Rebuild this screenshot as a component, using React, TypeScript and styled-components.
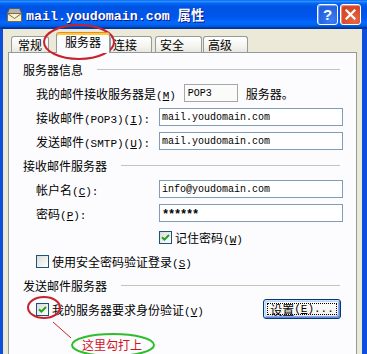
import React from "react";
import styled, { createGlobalStyle, css } from "styled-components";

const CJK = `"Noto Sans CJK SC", "Liberation Sans", sans-serif`;
const MONO = `"Liberation Mono", "Noto Sans CJK SC", monospace`;

const GlobalStyle = createGlobalStyle`
  html, body {
    margin: 0;
    padding: 0;
    background: #ECE9D8;
  }
  body {
    font-family: ${CJK};
    font-size: 12px;
    color: #000;
  }
`;

const Window = styled.div`
  position: relative;
  width: 367px;
  height: 354px;
  overflow: hidden;
  display: flex;
  flex-direction: column;
  background: #ECE9D8;
`;

const TitleBar = styled.div`
  flex: none;
  height: 29px;
  display: flex;
  align-items: center;
  padding: 0 6px 0 6px;
  background: linear-gradient(
    #0058ee 0%,
    #3593ff 4%,
    #288eff 6%,
    #127dff 8%,
    #036ffc 10%,
    #0262ee 14%,
    #0057e5 20%,
    #0054e3 24%,
    #0055eb 56%,
    #005bf5 66%,
    #026afe 76%,
    #0062ef 86%,
    #0052d6 92%,
    #0040ab 94%,
    #003092 100%
  );
`;

const TitleText = styled.span`
  margin-left: 3px;
  flex: 1;
  font-family: ${MONO};
  font-size: 13.3px;
  font-weight: bold;
  color: #fff;
  text-shadow: 1px 1px 0 #0a1883;
  white-space: nowrap;
`;

const CaptionButton = styled.div<{ $kind: "help" | "close" }>`
  box-sizing: border-box;
  width: 21px;
  height: 21px;
  margin-left: 2px;
  border: 1px solid #fff;
  border-radius: 3px;
  display: flex;
  align-items: center;
  justify-content: center;
  color: #fff;
  font-family: "Liberation Sans", sans-serif;
  font-weight: bold;
  font-size: 15px;
  ${({ $kind }) =>
    $kind === "help"
      ? css`
          background: radial-gradient(circle at 70% 80%, #3c7ef5 0%, #2663e0 60%, #1f57d2 100%);
          box-shadow: inset 1px 1px 1px #7aa8ff;
        `
      : css`
          background: radial-gradient(circle at 70% 80%, #e6673f 0%, #d9482a 60%, #c53c1c 100%);
          box-shadow: inset 1px 1px 1px #f09a7c;
        `}
`;

const Body = styled.div`
  flex: 1;
  display: flex;
  flex-direction: column;
  padding: 0 5px;
  border-left: 3px solid #0b4fdb;
  border-right: 5px solid #0b4fdb;
`;

const TabRow = styled.div`
  flex: none;
  height: 23px;
  display: flex;
  align-items: flex-end;
  padding-left: 3px;
`;

const Tab = styled.div<{ $active?: boolean; $w: number; $pl: number; $mr?: number }>`
  box-sizing: border-box;
  width: ${({ $w }) => $w}px;
  padding-left: ${({ $pl }) => $pl}px;
  margin-right: ${({ $mr }) => $mr ?? 0}px;
  border: 1px solid #919b9c;
  border-bottom: none;
  border-radius: 3px 3px 0 0;
  white-space: nowrap;
  ${({ $active }) =>
    $active
      ? css`
          position: relative;
          z-index: 1;
          height: 21px;
          margin-bottom: -1px;
          line-height: 17px;
          background: #fcfcfe;
          border-top-color: #e68b2c;
          box-shadow: inset 0 2px 0 #ffc83c;
        `
      : css`
          height: 16px;
          line-height: 15px;
          background: linear-gradient(#ffffff, #f5f4ef 60%, #e9e7df);
        `}
`;

const Panel = styled.div`
  flex: 1 0 auto;
  min-height: 310px;
  box-sizing: border-box;
  display: flex;
  flex-direction: column;
  padding: 4px 13px 0 14px;
  background: #fcfcfe;
  border: 1px solid #919b9c;
`;

const GroupHeader = styled.div`
  height: 24px;
  display: flex;
  align-items: center;
  gap: 14px;
  margin-right: 3px;
  white-space: nowrap;
`;

const Rule = styled.div`
  flex: 1;
  height: 1px;
  background: #c6c3b6;
`;

const Rows = styled.div`
  display: flex;
  flex-direction: column;
  padding-left: 13px;
`;

const FieldRow = styled.div`
  height: 24px;
  display: grid;
  grid-template-columns: 123px 1fr;
  align-items: center;
  white-space: nowrap;
`;

const InlineRow = styled.div`
  height: 24px;
  display: flex;
  align-items: center;
  gap: 8px;
  white-space: nowrap;
`;

const SplitRow = styled.div`
  height: 24px;
  display: flex;
  align-items: center;
  justify-content: space-between;
  padding-right: 2px;
`;

const Lat = styled.span`
  font-family: ${MONO};
  font-size: 11px;
`;

const TextBox = styled.div<{ $secret?: boolean }>`
  box-sizing: border-box;
  height: 18px;
  padding-left: 2px;
  display: flex;
  align-items: center;
  font-family: ${MONO};
  background: #fff;
  border: 1px solid #7f9db9;
  ${({ $secret }) =>
    $secret
      ? css`
          font-size: 12px;
          font-weight: bold;
          letter-spacing: -1.2px;
          padding-top: 3px;
        `
      : css`
          font-size: 10px;
        `}
`;

const StaticBox = styled.div`
  box-sizing: border-box;
  width: 54px;
  height: 18px;
  padding-left: 3px;
  display: flex;
  align-items: center;
  font-family: ${MONO};
  font-size: 10px;
  background: #fbfbf9;
  border: 1px solid #a7a6aa;
`;

const CheckItem = styled.label`
  display: flex;
  align-items: center;
  gap: 3px;
  white-space: nowrap;
`;

const Box = styled.span`
  box-sizing: border-box;
  width: 13px;
  height: 13px;
  display: flex;
  align-items: center;
  justify-content: center;
  border: 1px solid #1c5180;
  background: linear-gradient(135deg, #dcdcd7, #ffffff);
`;

const PushButton = styled.div`
  position: relative;
  box-sizing: border-box;
  width: 78px;
  height: 20px;
  display: flex;
  align-items: center;
  justify-content: center;
  border: 1px solid #003c74;
  border-radius: 3px;
  background: linear-gradient(#ffffff, #f3f2ed 80%, #d8d3c8);
  box-shadow: inset 1px 1px 0 #cee7ff, inset -1px -1px 0 #6982ee, inset 2px 2px 0 #bcd4f6,
    inset -2px -2px 0 #89ade4;
  white-space: nowrap;

  &::after {
    content: "";
    position: absolute;
    inset: 3px;
    border: 1px dotted #000;
  }
`;

const Overlay = styled.svg`
  position: absolute;
  left: 0;
  top: 0;
  pointer-events: none;
`;

const Note = styled.span`
  position: absolute;
  left: 82px;
  top: 337px;
  font-size: 12px;
  line-height: 16px;
  color: #d0141e;
  white-space: nowrap;
`;

function MailIcon() {
  return (
    <svg width="17" height="16" viewBox="0 0 17 16">
      <polygon points="3.5,1.5 13.5,1.5 16,7 1,7" fill="#b4b4b4" stroke="#5a5a5a" />
      <rect x="1.5" y="6.5" width="14" height="8" fill="#f6f0d0" stroke="#7d6d3e" />
      <polyline points="1.5,6.5 8.5,11.5 15.5,6.5" fill="none" stroke="#7d6d3e" />
    </svg>
  );
}

function CloseGlyph() {
  return (
    <svg width="11" height="11" viewBox="0 0 11 11">
      <path d="M1.5 1.5 L9.5 9.5 M9.5 1.5 L1.5 9.5" stroke="#fff" strokeWidth="2.2" strokeLinecap="square" />
    </svg>
  );
}

function CheckBox({ checked }: { checked?: boolean }) {
  return (
    <Box>
      {checked && (
        <svg width="9" height="9" viewBox="0 0 9 9">
          <polyline points="1,4.2 3.4,6.6 8,2" fill="none" stroke="#21a121" strokeWidth="2" />
        </svg>
      )}
    </Box>
  );
}

export default function App() {
  return (
    <Window>
      <GlobalStyle />
      <TitleBar>
        <MailIcon />
        <TitleText>mail.youdomain.com 属性</TitleText>
        <CaptionButton $kind="help">?</CaptionButton>
        <CaptionButton $kind="close">
          <CloseGlyph />
        </CaptionButton>
      </TitleBar>

      <Body>
        <TabRow>
          <Tab $w={38} $pl={6} $mr={7}>常规</Tab>
          <Tab $active $w={54} $pl={8}>服务器</Tab>
          <Tab $w={42} $pl={2} $mr={3}>连接</Tab>
          <Tab $w={47} $pl={4} $mr={1}>安全</Tab>
          <Tab $w={45} $pl={4}>高级</Tab>
        </TabRow>

        <Panel>
          <GroupHeader>
            服务器信息
            <Rule />
          </GroupHeader>
          <Rows>
            <InlineRow>
              <span>
                我的邮件接收服务器是<Lat>(<u>M</u>)</Lat>
              </span>
              <StaticBox>POP3</StaticBox>
              <span>服务器。</span>
            </InlineRow>
            <FieldRow>
              <span>
                接收邮件<Lat>(POP3)(<u>I</u>):</Lat>
              </span>
              <TextBox>mail.youdomain.com</TextBox>
            </FieldRow>
            <FieldRow>
              <span>
                发送邮件<Lat>(SMTP)(<u>U</u>):</Lat>
              </span>
              <TextBox>mail.youdomain.com</TextBox>
            </FieldRow>
          </Rows>

          <GroupHeader>
            接收邮件服务器
            <Rule />
          </GroupHeader>
          <Rows>
            <FieldRow>
              <span>
                帐户名<Lat>(<u>C</u>):</Lat>
              </span>
              <TextBox>info@youdomain.com</TextBox>
            </FieldRow>
            <FieldRow>
              <span>
                密码<Lat>(<u>P</u>):</Lat>
              </span>
              <TextBox $secret>******</TextBox>
            </FieldRow>
            <FieldRow>
              <span />
              <CheckItem>
                <CheckBox checked />
                <span>
                  记住密码<Lat>(<u>W</u>)</Lat>
                </span>
              </CheckItem>
            </FieldRow>
            <InlineRow>
              <CheckItem>
                <CheckBox />
                <span>
                  使用安全密码验证登录<Lat>(<u>S</u>)</Lat>
                </span>
              </CheckItem>
            </InlineRow>
          </Rows>

          <GroupHeader>
            发送邮件服务器
            <Rule />
          </GroupHeader>
          <Rows>
            <SplitRow>
              <CheckItem>
                <CheckBox checked />
                <span>
                  我的服务器要求身份验证<Lat>(<u>V</u>)</Lat>
                </span>
              </CheckItem>
              <PushButton>
                设置<Lat>(<u>E</u>)...</Lat>
              </PushButton>
            </SplitRow>
          </Rows>
        </Panel>
      </Body>

      <Overlay width="367" height="354" viewBox="0 0 367 354">
        <ellipse cx="79" cy="42" rx="35" ry="17" fill="none" stroke="#c8232c" strokeWidth="2" />
        <ellipse cx="44" cy="307.5" rx="16" ry="10.5" fill="none" stroke="#c8232c" strokeWidth="2" />
        <line x1="53" y1="322" x2="71" y2="338" stroke="#c8232c" strokeWidth="1" />
        <ellipse cx="113" cy="345" rx="41" ry="11" fill="none" stroke="#2ebd2e" strokeWidth="2" />
      </Overlay>
      <Note>这里勾打上</Note>
    </Window>
  );
}
